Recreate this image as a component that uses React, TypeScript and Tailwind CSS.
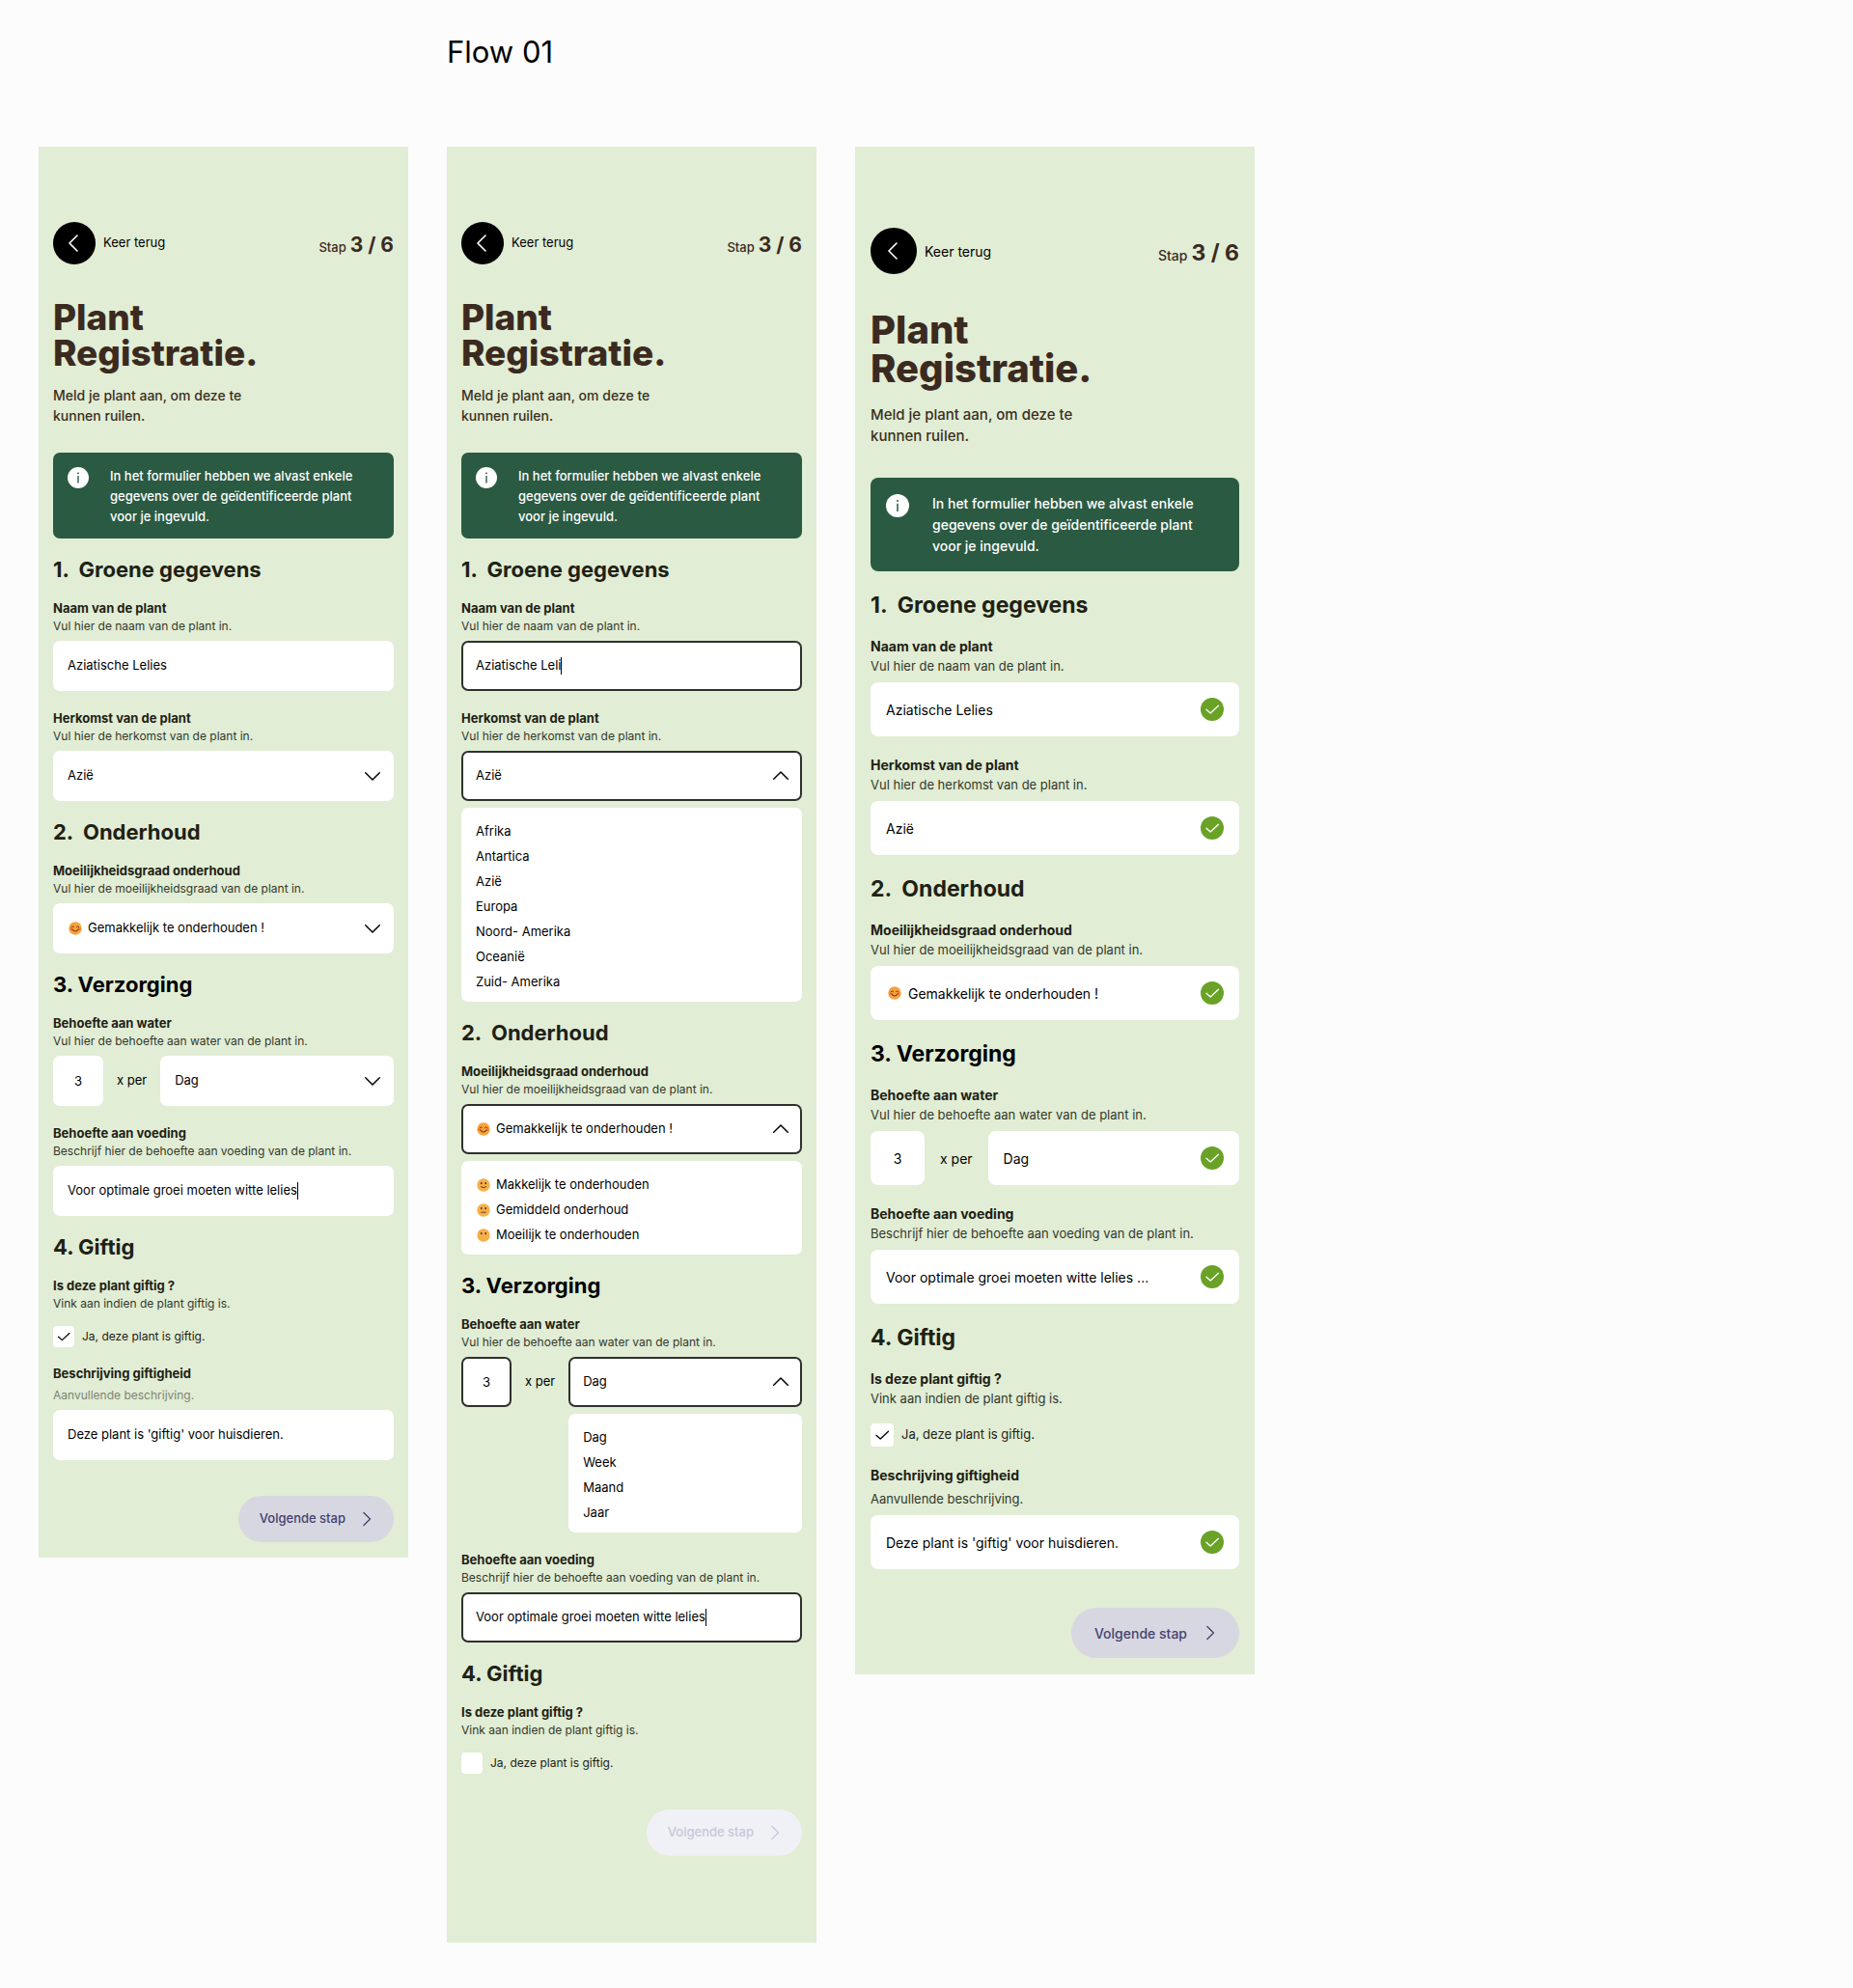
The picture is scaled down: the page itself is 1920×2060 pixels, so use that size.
import React, { createContext, useContext, useId } from "react";
import clsx from "clsx";

type Size = "sm" | "lg";

const styles = {
  sm: {
    card: "px-[15px] pt-[78px]",
    circle: "size-11",
    back: "gap-2 text-[13px]",
    step: "text-[13px]",
    stepCount: "text-[21px] leading-6",
    title: "mt-9 text-[37px] leading-[37px]",
    lead: "mt-[15px] text-[14px] leading-[21px]",
    notice: "mt-7 gap-[22px] rounded-[7px] pt-[14px] pr-3 pb-3 pl-[15px] text-[13px] leading-[21px]",
    noticeIcon: "size-[22px]",
    heading: "mt-[18px] mb-[17px] text-[22px] leading-7",
    label: "text-[13px] leading-[19px]",
    hint: "text-[12px] leading-[18px]",
    control: "mt-[6px] h-[52px] rounded-[7px] text-[13px]",
    padX: "px-[15px]",
    emojiPad: "pl-9",
    emojiLeft: "left-4",
    iconRight: "right-3",
    fieldGap: "mt-[19px]",
    number: "w-[52px]",
    per: "mx-[14px] text-[13px]",
    checkRow: "mt-[14px] gap-2 text-[12px]",
    checkbox: "size-[22px]",
    afterCheck: "mt-[18px]",
    next: "mt-[37px] h-12 gap-[14px] pr-[18px] pl-[22px] text-[13px]",
  },
  lg: {
    card: "px-4 pt-[84px]",
    circle: "size-12",
    back: "gap-2 text-[14px]",
    step: "text-[14px]",
    stepCount: "text-[23px] leading-6",
    title: "mt-[38px] text-[40px] leading-10",
    lead: "mt-[17px] text-[15px] leading-[22px]",
    notice: "mt-8 gap-6 rounded-lg pt-4 pr-3 pb-[15px] pl-4 text-[14px] leading-[22px]",
    noticeIcon: "size-6",
    heading: "mt-5 mb-[18px] text-[23px] leading-[30px]",
    label: "text-[14px] leading-5",
    hint: "text-[13px] leading-5",
    control: "mt-[7px] h-14 rounded-lg text-[14px]",
    padX: "px-4",
    emojiPad: "pl-[39px]",
    emojiLeft: "left-[18px]",
    iconRight: "right-4",
    fieldGap: "mt-5",
    number: "w-14",
    per: "mx-4 text-[14px]",
    checkRow: "mt-4 gap-2 text-[13px]",
    checkbox: "size-6",
    afterCheck: "mt-5",
    next: "mt-10 h-[52px] gap-4 pr-5 pl-6 text-[14px]",
  },
};

const SizeContext = createContext<Size>("sm");
const useStyles = () => styles[useContext(SizeContext)];

function Chevron({ dir, className }: { dir: "left" | "right" | "up" | "down"; className?: string }) {
  const d = {
    left: "M14 3 6 11l8 8",
    right: "M6 3l8 8-8 8",
    up: "M3 14.5l8-8 8 8",
    down: "M3 7.5l8 8 8-8",
  }[dir];
  return (
    <svg viewBox="0 0 22 22" aria-hidden="true" className={clsx("fill-none stroke-current", className)}>
      <path d={d} strokeWidth="1.6" strokeLinecap="round" strokeLinejoin="round" />
    </svg>
  );
}

function Tick({ className }: { className?: string }) {
  return (
    <svg viewBox="0 0 24 24" aria-hidden="true" className={clsx("fill-none", className)}>
      <path d="M6 12.2 10.2 16 18.5 8.2" strokeWidth="1.3" strokeLinecap="round" strokeLinejoin="round" />
    </svg>
  );
}

function ValidBadge() {
  return (
    <span className="pointer-events-none absolute top-1/2 right-4 size-6 -translate-y-1/2 rounded-full bg-[#69a226]">
      <Tick className="size-6 stroke-white" />
    </span>
  );
}

type Mood = "happy" | "smile" | "neutral" | "silent";

function Face({ mood, className }: { mood: Mood; className?: string }) {
  return (
    <svg viewBox="0 0 14 14" aria-hidden="true" className={clsx("size-[14px] shrink-0", className)}>
      <circle cx="7" cy="7" r="6.7" fill={mood === "happy" ? "#f6a33c" : "#f5b04a"} />
      {mood === "happy" ? (
        <g fill="none" stroke="#7a3412" strokeLinecap="round">
          <circle cx="2.9" cy="7.6" r="1.5" fill="#ef7a3a" stroke="none" />
          <circle cx="11.1" cy="7.6" r="1.5" fill="#ef7a3a" stroke="none" />
          <path d="M3.2 5.6q1.2-1.8 2.4 0M8.4 5.6q1.2-1.8 2.4 0" strokeWidth="1" />
          <path d="M3.8 8q3.2 4 6.4 0" strokeWidth="1.1" />
        </g>
      ) : (
        <g fill="none" stroke="#6b3d1a" strokeLinecap="round">
          <ellipse cx="4.8" cy="5.2" rx=".9" ry="1.1" fill="#5c3318" stroke="none" />
          <ellipse cx="9.2" cy="5.2" rx=".9" ry="1.1" fill="#5c3318" stroke="none" />
          {mood === "smile" && <path d="M4.4 8.8q2.6 2 5.2 0" strokeWidth="1" />}
          {mood === "neutral" && <path d="M4.8 9.2h4.4" strokeWidth="1" />}
        </g>
      )}
    </svg>
  );
}

function Field({
  label,
  hint,
  id,
  first,
  hintClass,
  children,
}: {
  label: string;
  hint: string;
  id: string;
  first?: boolean;
  hintClass?: string;
  children: React.ReactNode;
}) {
  const s = useStyles();
  return (
    <div className={clsx(!first && s.fieldGap)}>
      <label htmlFor={id} className={clsx("block font-bold text-[#1e2114]", s.label)}>
        {label}
      </label>
      <p className={clsx(s.hint, hintClass ?? "text-[#33382b]")}>{hint}</p>
      {children}
    </div>
  );
}

const focusRing = "border-2 border-[#2f312c]";

function TextInput({
  id,
  value,
  active,
  caret,
  valid,
}: {
  id: string;
  value: string;
  active?: boolean;
  caret?: boolean;
  valid?: boolean;
}) {
  const s = useStyles();
  return (
    <div
      className={clsx(
        "relative flex items-center bg-white text-black",
        s.control,
        active ? clsx(focusRing, "px-[13px]") : s.padX,
      )}
    >
      <input
        id={id}
        type="text"
        defaultValue={value}
        className={clsx("min-w-0 bg-transparent outline-none", caret ? "field-sizing-content" : "w-full")}
      />
      {caret && <span className="h-[18px] w-px bg-black" />}
      {valid && <ValidBadge />}
    </div>
  );
}

function Select({
  id,
  value,
  mood,
  open,
  valid,
}: {
  id: string;
  value: string;
  mood?: Mood;
  open?: boolean;
  valid?: boolean;
}) {
  const s = useStyles();
  return (
    <div className={clsx("relative bg-white text-black", s.control)}>
      <select
        id={id}
        defaultValue={value}
        className={clsx(
          "size-full appearance-none rounded-[inherit] bg-transparent outline-none",
          open ? clsx(focusRing, mood ? "pl-[34px]" : "pl-[13px]") : mood ? s.emojiPad : s.padX,
        )}
      >
        <option>{value}</option>
      </select>
      {mood && (
        <Face mood={mood} className={clsx("pointer-events-none absolute top-1/2 -translate-y-1/2", s.emojiLeft)} />
      )}
      {valid ? (
        <ValidBadge />
      ) : (
        <Chevron
          dir={open ? "up" : "down"}
          className={clsx("pointer-events-none absolute top-1/2 size-5 -translate-y-1/2", s.iconRight)}
        />
      )}
    </div>
  );
}

function Options({ items }: { items: { text: string; mood?: Mood }[] }) {
  return (
    <ul className="mt-[7px] rounded-[7px] bg-white px-[15px] pt-3 pb-[7px] text-[13px] text-black">
      {items.map((item) => (
        <li key={item.text}>
          <button type="button" className="flex h-[26px] w-full items-center gap-[6px] text-left">
            {item.mood && <Face mood={item.mood} className="ml-px" />}
            {item.text}
          </button>
        </li>
      ))}
    </ul>
  );
}

function Heading({ children, black }: { children: string; black?: boolean }) {
  const s = useStyles();
  return (
    <h3 className={clsx("font-bold whitespace-pre", black ? "text-black" : "text-[#1e2114]", s.heading)}>
      {children}
    </h3>
  );
}

const continents = ["Afrika", "Antartica", "Azië", "Europa", "Noord- Amerika", "Oceanië", "Zuid- Amerika"];
const periods = ["Dag", "Week", "Maand", "Jaar"];
const upkeep: { text: string; mood: Mood }[] = [
  { text: "Makkelijk te onderhouden", mood: "smile" },
  { text: "Gemiddeld onderhoud", mood: "neutral" },
  { text: "Moeilijk te onderhouden", mood: "silent" },
];

function Screen({ size, mode }: { size: Size; mode: "filled" | "editing" | "valid" }) {
  const s = styles[size];
  const uid = useId();
  const editing = mode === "editing";
  const valid = mode === "valid";
  const food = "Voor optimale groei moeten witte lelies";

  return (
    <SizeContext.Provider value={size}>
      <form className={clsx("flex flex-col bg-[#e1edd5]", s.card, editing ? "pb-[90px]" : valid ? "pb-[17px]" : "pb-4")}>
        <div className="flex items-center justify-between">
          <button type="button" className={clsx("flex items-center text-black", s.back)}>
            <span className={clsx("grid place-items-center rounded-full bg-black text-white", s.circle)}>
              <Chevron dir="left" className="size-[22px]" />
            </span>
            Keer terug
          </button>
          <p className={clsx("flex items-baseline gap-1 pt-1 font-medium text-[#3b2a20]", s.step)}>
            Stap <span className={clsx("font-bold", s.stepCount)}>3 / 6</span>
          </p>
        </div>

        <h2 className={clsx("font-extrabold text-[#3b2a20]", s.title)}>
          Plant
          <br />
          Registratie.
        </h2>
        <p className={clsx("font-medium text-[#3b2f20]", s.lead)}>
          Meld je plant aan, om deze te
          <br />
          kunnen ruilen.
        </p>

        <div className={clsx("flex items-start bg-[#2b5a42] font-medium text-white", s.notice)}>
          <svg viewBox="0 0 24 24" aria-hidden="true" className={clsx("mt-px shrink-0", s.noticeIcon)}>
            <circle cx="12" cy="12" r="12" fill="#fff" />
            <circle cx="12" cy="7" r="1" fill="#2b5a42" />
            <path d="M12 9.8v8.2" stroke="#2b5a42" strokeWidth="1.5" />
          </svg>
          <p>
            In het formulier hebben we alvast enkele
            <br />
            gegevens over de geïdentificeerde plant
            <br />
            voor je ingevuld.
          </p>
        </div>

        <Heading>{"1.  Groene gegevens"}</Heading>
        <Field first id={`${uid}name`} label="Naam van de plant" hint="Vul hier de naam van de plant in.">
          <TextInput
            id={`${uid}name`}
            value={editing ? "Aziatische Leli" : "Aziatische Lelies"}
            active={editing}
            caret={editing}
            valid={valid}
          />
        </Field>
        <Field id={`${uid}origin`} label="Herkomst van de plant" hint="Vul hier de herkomst van de plant in.">
          <Select id={`${uid}origin`} value="Azië" open={editing} valid={valid} />
          {editing && <Options items={continents.map((text) => ({ text }))} />}
        </Field>

        <Heading>{"2.  Onderhoud"}</Heading>
        <Field
          first
          id={`${uid}level`}
          label="Moeilijkheidsgraad onderhoud"
          hint="Vul hier de moeilijkheidsgraad van de plant in."
        >
          <Select id={`${uid}level`} value="Gemakkelijk te onderhouden !" mood="happy" open={editing} valid={valid} />
          {editing && <Options items={upkeep} />}
        </Field>

        <Heading black>3. Verzorging</Heading>
        <Field first id={`${uid}water`} label="Behoefte aan water" hint="Vul hier de behoefte aan water van de plant in.">
          <div className="flex items-start">
            <input
              id={`${uid}water`}
              type="text"
              inputMode="numeric"
              defaultValue="3"
              className={clsx("bg-white text-center text-black outline-none", s.control, s.number, editing && focusRing)}
            />
            <label htmlFor={`${uid}period`} className={clsx("flex items-center text-black", s.control, s.per)}>
              x per
            </label>
            <div className="min-w-0 flex-1">
              <Select id={`${uid}period`} value="Dag" open={editing} valid={valid} />
              {editing && <Options items={periods.map((text) => ({ text }))} />}
            </div>
          </div>
        </Field>
        <Field id={`${uid}food`} label="Behoefte aan voeding" hint="Beschrijf hier de behoefte aan voeding van de plant in.">
          <TextInput
            id={`${uid}food`}
            value={valid ? `${food} ...` : food}
            active={editing}
            caret={!valid}
            valid={valid}
          />
        </Field>

        <Heading>4. Giftig</Heading>
        <p className={clsx("font-bold text-[#1e2114]", s.label)}>Is deze plant giftig ?</p>
        <p className={clsx("text-[#33382b]", s.hint)}>Vink aan indien de plant giftig is.</p>
        <label className={clsx("flex items-center self-start text-[#1e2114]", s.checkRow)}>
          <span className="grid">
            <input
              type="checkbox"
              defaultChecked={!editing}
              className={clsx("peer col-start-1 row-start-1 appearance-none rounded bg-white", s.checkbox)}
            />
            <Tick
              className={clsx(
                "pointer-events-none invisible col-start-1 row-start-1 stroke-black peer-checked:visible",
                s.checkbox,
              )}
            />
          </span>
          Ja, deze plant is giftig.
        </label>

        {!editing && (
          <div className={s.afterCheck}>
            <Field
              first
              id={`${uid}toxic`}
              label="Beschrijving giftigheid"
              hint="Aanvullende beschrijving."
              hintClass={clsx("mt-1", valid ? "text-[#33382b]" : "text-[#7c8474]")}
            >
              <TextInput id={`${uid}toxic`} value="Deze plant is 'giftig' voor huisdieren." valid={valid} />
            </Field>
          </div>
        )}

        <button
          type="button"
          disabled={editing}
          className={clsx(
            "flex items-center self-end rounded-full font-medium",
            editing ? "bg-[#f0f1f6] text-[#c5c8da]" : "bg-[#d7d7e1] text-[#45426e]",
            s.next,
          )}
        >
          Volgende stap
          <Chevron dir="right" className="size-[18px]" />
        </button>
      </form>
    </SizeContext.Provider>
  );
}

export default function App() {
  return (
    <main className="min-h-screen bg-[#fcfcfc] px-10 pb-[47px] font-['Inter',sans-serif]">
      <div className="grid grid-cols-1 items-start gap-x-10 xl:grid-cols-[383fr_383fr_414fr_540fr]">
        <h1 className="pt-[34px] pb-[78px] text-[31px] leading-10 text-black xl:col-start-2">Flow 01</h1>
        <div className="xl:col-start-1 xl:row-start-2">
          <Screen size="sm" mode="filled" />
        </div>
        <div className="xl:row-start-2">
          <Screen size="sm" mode="editing" />
        </div>
        <div className="xl:row-start-2">
          <Screen size="lg" mode="valid" />
        </div>
      </div>
    </main>
  );
}
